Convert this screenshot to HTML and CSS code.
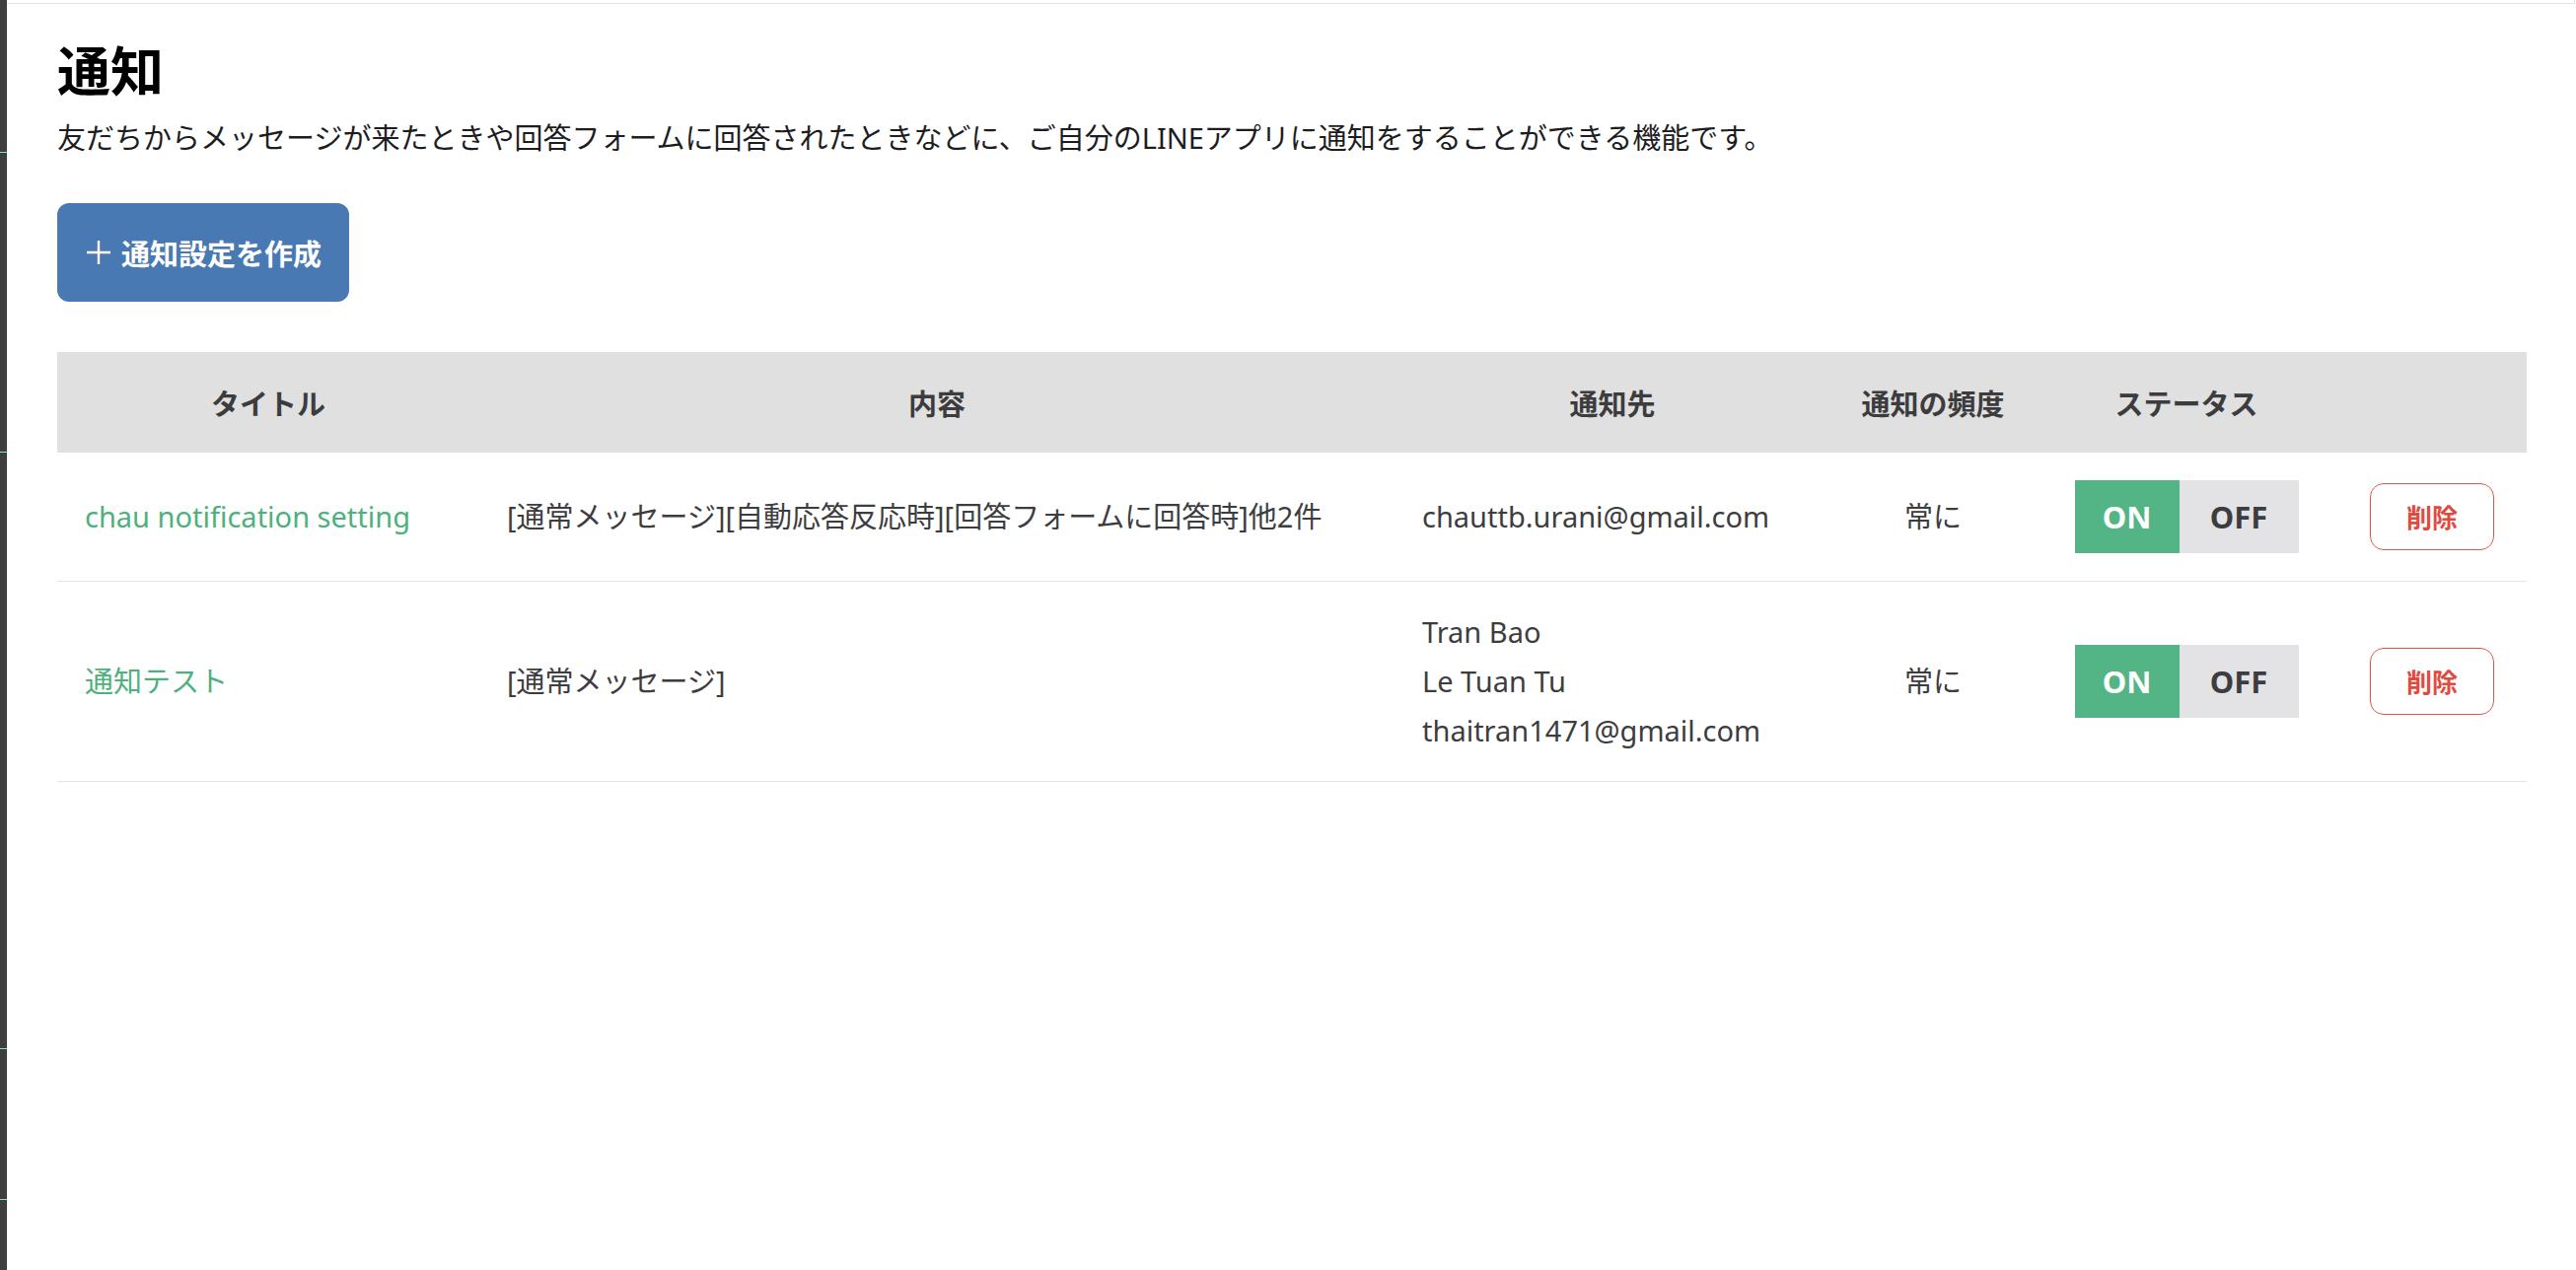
FILE: index.html
```html
<!DOCTYPE html>
<html lang="ja">
<head>
  <meta charset="UTF-8" />
  <meta name="viewport" content="width=device-width, initial-scale=1" />
  <title>通知</title>
  <link rel="stylesheet" href="styles.css">
</head>
<body>
  <div class="layout">
    <aside class="sidebar">
      <div class="sidebar-item item-a"></div>
      <div class="sidebar-item item-b"></div>
      <div class="sidebar-item item-c"></div>
      <div class="sidebar-item item-d"></div>
    </aside>

    <div class="main">
      <div class="topbar"></div>

      <div class="content">
        <h1 class="page-title">通知</h1>
        <p class="page-desc">友だちからメッセージが来たときや回答フォームに回答されたときなどに、ご自分のLINEアプリに通知をすることができる機能です。</p>

        <button class="btn-create">
          <svg class="btn-plus" width="26" height="26" viewBox="0 0 26 26">
            <path d="M13 1v24M1 13h24" stroke="#fff" stroke-width="2.4" fill="none" />
          </svg>
          <span>通知設定を作成</span>
        </button>

        <table class="notify-table">
          <colgroup>
            <col class="col-title">
            <col class="col-body">
            <col class="col-target">
            <col class="col-freq">
            <col class="col-status">
            <col class="col-action">
          </colgroup>
          <thead>
            <tr>
              <th>タイトル</th>
              <th>内容</th>
              <th>通知先</th>
              <th>通知の頻度</th>
              <th>ステータス</th>
              <th></th>
            </tr>
          </thead>
          <tbody>
            <tr>
              <td><a class="title-link" href="#">chau notification setting</a></td>
              <td>[通常メッセージ][自動応答反応時][回答フォームに回答時]他2件</td>
              <td>
                <div class="target-line">chauttb.urani@gmail.com</div>
              </td>
              <td class="center">常に</td>
              <td class="center status-cell">
                <div class="toggle">
                  <span class="toggle-on">ON</span>
                  <span class="toggle-off">OFF</span>
                </div>
              </td>
              <td class="center"><button class="btn-delete">削除</button></td>
            </tr>
            <tr>
              <td><a class="title-link" href="#">通知テスト</a></td>
              <td>[通常メッセージ]</td>
              <td>
                <div class="target-line">Tran Bao</div>
                <div class="target-line">Le Tuan Tu</div>
                <div class="target-line">thaitran1471@gmail.com</div>
              </td>
              <td class="center">常に</td>
              <td class="center status-cell">
                <div class="toggle">
                  <span class="toggle-on">ON</span>
                  <span class="toggle-off">OFF</span>
                </div>
              </td>
              <td class="center"><button class="btn-delete">削除</button></td>
            </tr>
          </tbody>
        </table>
      </div>
    </div>
  </div>
</body>
</html>
```

FILE: styles.css
```css
body {
  font-family: 'Noto Sans', 'Noto Sans CJK JP', sans-serif;
  background: #fff;
  color: #3d3d40;
  margin: 0;
}
.layout {
  display: flex;
  min-height: 1288px;
}
.sidebar {
  width: 7px;
  flex: 0 0 7px;
  background: #3e3e40;
  display: flex;
  flex-direction: column;
}
.sidebar-item {
  border-bottom: 1px solid #7fe3c8;
}
.item-a { height: 154px; }
.item-b { height: 303px; }
.item-c { height: 604px; }
.item-d { height: 152px; }

.main {
  flex: 1;
  min-width: 0;
}
.topbar {
  height: 3px;
  border-bottom: 1px solid #e3e3e3;
  border-right: 1px solid #e3e3e3;
  margin-right: 1px;
}
.content {
  padding: 0 50px 0 51px;
}
.page-title {
  font-size: 54px;
  font-weight: 700;
  line-height: 72px;
  color: #000;
  margin: 32px 0 0;
}
.page-desc {
  font-size: 29px;
  line-height: 42px;
  color: #1d1d1f;
  margin: 11px 0 0;
}
.btn-create {
  display: inline-flex;
  align-items: center;
  gap: 10px;
  height: 100px;
  margin-top: 45px;
  padding: 0 28px 0 29px;
  background: #4879b2;
  border: none;
  border-radius: 12px;
  color: #fff;
  font-family: inherit;
  font-size: 29px;
  font-weight: 700;
  cursor: pointer;
}
.btn-plus {
  display: block;
}

.notify-table {
  width: 100%;
  margin-top: 51px;
  border-collapse: collapse;
  table-layout: fixed;
  font-size: 29px;
}
.col-title { width: 428px; }
.col-body { width: 928px; }
.col-target { width: 442px; }
.col-freq { width: 208px; }
.col-status { width: 306px; }
.col-action { width: 192px; }

.notify-table th {
  height: 102px;
  padding: 0;
  background: #e0e0e0;
  color: #3c3c3e;
  font-weight: 700;
  text-align: center;
  vertical-align: middle;
}
.notify-table td {
  padding: 26px 28px;
  line-height: 50px;
  border-bottom: 1px solid #e4e4e4;
  vertical-align: middle;
  white-space: nowrap;
}
.notify-table td.center {
  text-align: center;
  padding-left: 0;
  padding-right: 0;
}
.notify-table td.status-cell {
  padding-top: 28px;
  padding-bottom: 28px;
}
.title-link {
  color: #4db17c;
  text-decoration: none;
}
.toggle {
  display: inline-flex;
  height: 74px;
  vertical-align: middle;
  font-size: 31px;
  font-weight: 700;
}
.toggle-on,
.toggle-off {
  display: flex;
  align-items: center;
  justify-content: center;
}
.toggle-on {
  width: 106px;
  background: #53b585;
  color: #fff;
}
.toggle-off {
  width: 121px;
  background: #e3e3e6;
  color: #3d3d40;
}
.btn-delete {
  width: 126px;
  height: 68px;
  background: #fff;
  border: 1px solid #e2574c;
  border-radius: 14px;
  color: #e04b40;
  font-family: inherit;
  font-size: 26px;
  font-weight: 700;
  vertical-align: middle;
  cursor: pointer;
}
```
